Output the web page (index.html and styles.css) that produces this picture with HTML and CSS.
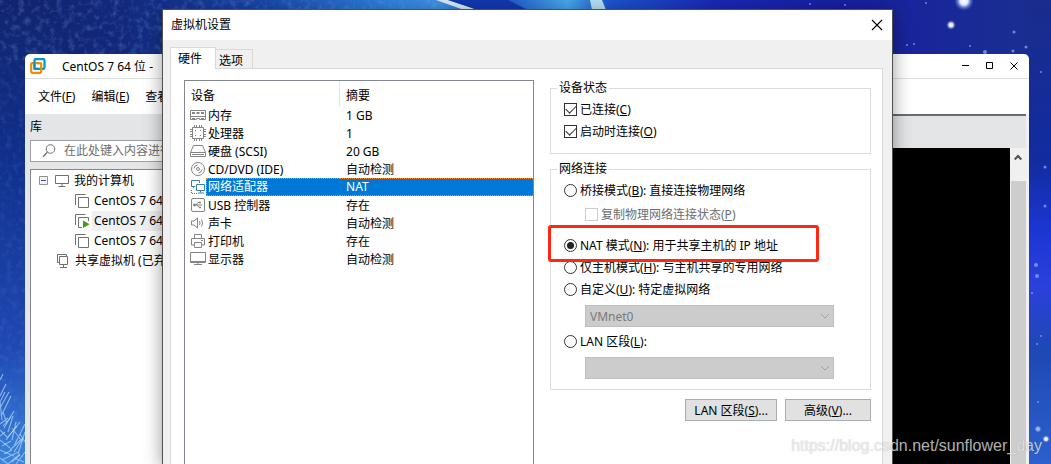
FILE: index.html
```html
<!DOCTYPE html>
<html lang="zh-CN">
<head>
  <meta charset="utf-8">
  <title>虚拟机设置</title>
  <link rel="stylesheet" href="styles.css">
</head>
<body>
  <div class="desktop">
    <svg class="wallpaper" viewBox="0 0 1051 464" preserveAspectRatio="xMidYMid slice" aria-hidden="true">
      <defs>
        <linearGradient id="sky-left" x1="0" y1="0" x2="0" y2="1">
          <stop offset="0" stop-color="#12246f"/>
          <stop offset="0.35" stop-color="#10308c"/>
          <stop offset="0.75" stop-color="#2048b4"/>
          <stop offset="1" stop-color="#3a84dc"/>
        </linearGradient>
        <linearGradient id="sky-top" x1="0" y1="0" x2="1" y2="0">
          <stop offset="0" stop-color="#12246f"/>
          <stop offset="0.12" stop-color="#12287c"/>
          <stop offset="0.25" stop-color="#1846a8"/>
          <stop offset="0.36" stop-color="#2c7cd8"/>
          <stop offset="0.42" stop-color="#4090e4"/>
          <stop offset="0.47" stop-color="#1648c0"/>
          <stop offset="0.54" stop-color="#48a8ec"/>
          <stop offset="0.58" stop-color="#1c54cc"/>
          <stop offset="0.68" stop-color="#1a28b4"/>
          <stop offset="0.8" stop-color="#181fa0"/>
          <stop offset="1" stop-color="#1a3090"/>
        </linearGradient>
        <linearGradient id="sky-right" x1="0" y1="0" x2="0" y2="1">
          <stop offset="0" stop-color="#1a2c8c"/>
          <stop offset="0.35" stop-color="#122ca0"/>
          <stop offset="0.5" stop-color="#1c36d4"/>
          <stop offset="0.62" stop-color="#2c40dc"/>
          <stop offset="0.75" stop-color="#1e48b4"/>
          <stop offset="1" stop-color="#2c60cc"/>
        </linearGradient>
        <radialGradient id="star">
          <stop offset="0" stop-color="#ffffff"/>
          <stop offset="0.4" stop-color="#dce4ff"/>
          <stop offset="1" stop-color="#4060d8" stop-opacity="0"/>
        </radialGradient>
        <filter id="grain" x="0" y="0" width="1" height="1">
          <feTurbulence type="fractalNoise" baseFrequency="0.16" numOctaves="3" seed="4"/>
          <feColorMatrix values="0 0 0 0 0.25  0 0 0 0 0.5  0 0 0 0 0.95  1.6 0 0 0 -0.75"/>
        </filter>
      </defs>
      <rect width="1051" height="60" fill="url(#sky-top)"/>
      <rect width="60" height="464" fill="url(#sky-left)"/>
      <rect x="1025" width="26" height="464" fill="url(#sky-right)"/>
      <path d="M436 0h12l30 10h-14z" fill="#d4ecf8"/>
      <path d="M590 0h12l4 10h-14z" fill="#b4e0f4"/>
      <path d="M448 0h60l20 10h-50z" fill="#1238b0"/>
      <rect width="440" height="60" filter="url(#grain)" opacity="0.4"/>
      <rect y="60" width="25" height="404" filter="url(#grain)" opacity="0.2"/>
      <g fill="none" stroke="#9cc8f4" stroke-width="1.2" opacity="0.8">
        <path d="M0 380l3-6M0 396l6-12M0 408l9-16M1 416l10-20M2 420l-2-18M4 428l10-17M8 432l5-16M6 440l14-18M12 440l4-18M14 446l11-22M10 450l13-12M18 454l7-22M0 430l7 7M0 440l10 8M0 450l14 6M2 460l16-8M8 464l12-10M16 464l9-12M0 424l8-6M3 412l4 12M20 434l5 8M12 428l9 12M0 458l8 6M14 458l10 4"/>
      </g>
      <g fill="none" stroke="#d4eafc" opacity="0.7">
        <path d="M0 402l5-10M3 426l8-9M7 438l10-12M2 446l9-5M14 452l9-14M4 454l8-4M12 462l8-7M0 436l5-4"/>
      </g>
      <circle cx="964" cy="1" r="10" fill="url(#star)"/>
      <circle cx="951" cy="25" r="5" fill="url(#star)"/>
      <circle cx="1046" cy="439" r="4" fill="url(#star)"/>
      <circle cx="1038" cy="429" r="4" fill="url(#star)" opacity="0.6"/>
      <g fill="#7ca4ec" opacity="0.8">
        <circle cx="1014" cy="32" r="1.5"/>
        <circle cx="985" cy="52" r="2"/>
        <circle cx="1013" cy="51" r="1.5"/>
        <circle cx="1026" cy="47" r="1.5"/>
        <circle cx="970" cy="46" r="1"/>
        <circle cx="907" cy="45" r="1"/>
        <circle cx="914" cy="44" r="1"/>
        <circle cx="926" cy="3" r="1"/>
        <circle cx="845" cy="5" r="1"/>
        <circle cx="810" cy="4" r="1"/>
        <circle cx="1041" cy="72" r="1"/>
        <circle cx="1045" cy="167" r="1.5"/>
        <circle cx="1045" cy="206" r="1.5"/>
        <circle cx="1036" cy="265" r="2"/>
        <circle cx="1037" cy="276" r="2"/>
        <circle cx="1032" cy="293" r="1"/>
        <circle cx="1037" cy="344" r="1"/>
        <circle cx="1041" cy="336" r="1"/>
        <circle cx="1038" cy="402" r="1"/>
      </g>
    </svg>

    <div class="workstation">
      <div class="ws-title">
        <svg class="logo" width="16" height="16" viewBox="0 0 16 16" aria-hidden="true">
          <rect x="4.5" y="1.2" width="10" height="9.6" rx="1" fill="none" stroke="#0095d3" stroke-width="2.2"/>
          <rect x="1.2" y="5.2" width="10" height="9.6" rx="1" fill="none" stroke="#f38b00" stroke-width="2.2"/>
          <path d="M4.5 4v6.8h4" fill="none" stroke="#0095d3" stroke-width="2.2"/>
        </svg>
        <span class="ws-name">CentOS 7 64 位 -</span>
        <button class="win-btn" aria-label="最小化"><svg width="8" height="8" viewBox="0 0 8 8"><path d="M0 3.5h7" stroke="#000"/></svg></button>
        <button class="win-btn" aria-label="最大化"><svg width="8" height="8" viewBox="0 0 8 8"><path d="M.5.5h6v6h-6z" fill="none" stroke="#000"/></svg></button>
        <button class="win-btn" aria-label="关闭"><svg width="8" height="8" viewBox="0 0 8 8"><path d="M.5.5l7 7M7.5.5l-7 7" stroke="#000"/></svg></button>
      </div>
      <div class="menubar">
        <button>文件(<u>F</u>)</button>
        <button>编辑(<u>E</u>)</button>
        <button>查看(<u>V</u>)</button>
      </div>
      <div class="ws-body">
        <div class="library">
          <label class="library-label" for="search">库</label>
          <div class="search">
            <svg width="14" height="14" viewBox="0 0 14 14" aria-hidden="true"><circle cx="8.5" cy="5" r="4.3" fill="none" stroke="#707070"/><path d="M5.4 8.2L1 12.8" stroke="#707070" stroke-width="1.3"/></svg>
            <input type="text" id="search" placeholder="在此处键入内容进行搜索">
          </div>
          <ul class="tree">
            <li>
              <svg class="toggle" width="10" height="10" viewBox="0 0 10 10"><path d="M.5.5h8v8h-8z" fill="#f4f4f4" stroke="#919191"/><path d="M2 4.5h5" stroke="#3350a8"/></svg>
              <svg width="16" height="14" viewBox="0 0 16 14" fill="none" stroke="#707070"><path d="M1.5 1.5h13v8h-13zM8 10v2M4.500 12.500h7"/></svg>
              <span>我的计算机</span>
            </li>
            <li class="vm">
              <svg width="16" height="14" viewBox="0 0 16 14" fill="none" stroke="#707070"><path d="M1.500 11V.500h10M4.500 3.500h10v10h-10z"/></svg>
              <span>CentOS 7 64 位</span>
            </li>
            <li class="vm">
              <svg width="16" height="14" viewBox="0 0 16 14" fill="none" stroke="#707070"><path d="M1.500 11V.500h10M8 13.500H4.500v-10h10V7"/><path d="M9 6.500l6.500 3.700-6.500 3.700z" fill="#3f9c16" stroke="none"/></svg>
              <span class="running">CentOS 7 64 位</span>
            </li>
            <li class="vm">
              <svg width="16" height="14" viewBox="0 0 16 14" fill="none" stroke="#707070"><path d="M1.500 11V.500h10M4.500 3.500h10v10h-10z"/></svg>
              <span>CentOS 7 64 位</span>
            </li>
            <li class="shared">
              <svg width="16" height="14" viewBox="0 0 16 14" fill="none" stroke="#707070"><path d="M4 8.500H2.500v-8h9V2M4.500 2.500h8v8h-8zM8.500 10.500v3M5 13.500h7"/></svg>
              <span>共享虚拟机 (已弃用)</span>
            </li>
          </ul>
        </div>
        <div class="console">
          <div class="console-bar"></div>
          <div class="console-view">
            <div class="screen"></div>
            <div class="scrollbar">
              <svg width="8" height="7" viewBox="0 0 8 7"><path d="M.7 5.500L4 2l3.300 3.500" fill="none" stroke="#505050" stroke-width="2"/></svg>
              <div class="thumb"></div>
            </div>
          </div>
        </div>
      </div>
    </div>

    <div class="dialog" role="dialog" aria-labelledby="dialog-title">
      <div class="dialog-title">
        <span id="dialog-title">虚拟机设置</span>
        <button class="win-btn" aria-label="关闭"><svg width="12" height="12" viewBox="0 0 12 12"><path d="M1 1l10 10M11 1L1 11" stroke="#000" stroke-width="1.1"/></svg></button>
      </div>
      <div class="dialog-body">
        <div class="tabs" role="tablist">
          <button class="tab active" role="tab" aria-selected="true">硬件</button>
          <button class="tab" role="tab">选项</button>
        </div>
        <div class="panel">
          <div class="device-list">
            <table>
              <colgroup>
                <col class="col-icon">
                <col class="col-name">
                <col>
              </colgroup>
              <thead>
                <tr><th class="name-head" colspan="2">设备</th><th>摘要</th></tr>
              </thead>
              <tbody>
                <tr>
                  <td class="icon"><svg width="16" height="16" viewBox="0 0 16 16" fill="none" stroke="#858585"><path d="M.500 3.500h15v9h-6v-1h-3v1h-6z"/><path d="M2 5h3v2H2zM6.500 5h3v2h-3zM11 5h3v2h-3z" fill="#858585" stroke="none"/><path d="M1 9.500h14M2 11.500h3M11 11.500h3"/></svg></td>
                  <td>内存</td><td>1 GB</td>
                </tr>
                <tr>
                  <td class="icon"><svg width="16" height="16" viewBox="0 0 16 16" fill="none" stroke="#858585"><path d="M2.500 2.500h11v11h-11zM4.500 0v2M6.500 0v2M9.500 0v2M11.500 0v2M4.500 14v2M6.500 14v2M9.500 14v2M11.500 14v2M0 4.500h2M0 6.500h2M0 9.500h2M0 11.500h2M14 4.500h2M14 6.500h2M14 9.500h2M14 11.500h2"/><path d="M5 5h1v1H5zM10 5h1v1h-1zM5 10h1v1H5zM10 10h1v1h-1z" fill="#858585" stroke="none"/></svg></td>
                  <td>处理器</td><td>1</td>
                </tr>
                <tr>
                  <td class="icon"><svg width="16" height="16" viewBox="0 0 16 16" fill="none" stroke="#858585"><path d="M3.500 2.500h9l3 7v4H.500v-4zM.500 9.500h15M2 11.500h12"/></svg></td>
                  <td>硬盘 (SCSI)</td><td>20 GB</td>
                </tr>
                <tr>
                  <td class="icon"><svg width="16" height="16" viewBox="0 0 16 16" fill="none" stroke="#858585"><circle cx="8" cy="8" r="6.500"/><circle cx="8" cy="8" r="1.500"/><path d="M4 7.500A4 4 0 0 1 7.500 4M12 8.500A4 4 0 0 1 8.500 12"/></svg></td>
                  <td>CD/DVD (IDE)</td><td>自动检测</td>
                </tr>
                <tr class="selected">
                  <td class="icon"><svg width="16" height="16" viewBox="0 0 16 16" fill="none" stroke="#3c7ca8"><path d="M5 7.500H1.500v-6h8V4"/><path d="M6.500 5.500h8v6h-8zM10.500 12v1.500M8 14h6" fill="#fff"/><path d="M3.500 8v2M1.500 11v3.500H7" stroke-dasharray="1 1"/></svg></td>
                  <td>网络适配器</td><td>NAT</td>
                </tr>
                <tr>
                  <td class="icon"><svg width="16" height="16" viewBox="0 0 16 16" fill="none" stroke="#858585"><rect x="1.500" y="1.500" width="13" height="13" rx="1.500"/><path d="M4 8h8M6 8l2-2.500h2M7 8l2 2.500h1"/><circle cx="4.500" cy="8" r="1" fill="#858585"/><path d="M9.500 5h1v1h-1zM9.500 10h1v1h-1z" fill="#858585"/></svg></td>
                  <td>USB 控制器</td><td>存在</td>
                </tr>
                <tr>
                  <td class="icon"><svg width="16" height="16" viewBox="0 0 16 16" fill="none" stroke="#858585"><path d="M1.500 6h2.500l3.500-3v10L4 10H1.500zM9.500 6q1 2 0 4M11.500 4.500q2 3.500 0 7"/></svg></td>
                  <td>声卡</td><td>自动检测</td>
                </tr>
                <tr>
                  <td class="icon"><svg width="16" height="16" viewBox="0 0 16 16" fill="none" stroke="#858585"><path d="M4.500 5.500v-4h7v4M4 12H1.500V5.500h13V12H12M4.500 9.500h7v5h-7zM11 7.500h2"/></svg></td>
                  <td>打印机</td><td>存在</td>
                </tr>
                <tr>
                  <td class="icon"><svg width="16" height="16" viewBox="0 0 16 16" fill="none" stroke="#858585"><path d="M.500 1.500h15v10H.500z"/><path d="M1 10.500h14M4 13.500h8M8 12v1"/></svg></td>
                  <td>显示器</td><td>自动检测</td>
                </tr>
              </tbody>
            </table>
          </div>

          <form class="settings">
            <fieldset>
              <legend>设备状态</legend>
              <label class="option"><input type="checkbox" checked><span>已连接(<u>C</u>)</span></label>
              <label class="option"><input type="checkbox" checked><span>启动时连接(<u>O</u>)</span></label>
            </fieldset>
            <fieldset class="network">
              <legend>网络连接</legend>
              <label class="option"><input type="radio" name="net"><span>桥接模式(<u>B</u>): 直接连接物理网络</span></label>
              <label class="option sub"><input type="checkbox" disabled><span>复制物理网络连接状态(<u>P</u>)</span></label>
              <div class="highlighted">
                <label class="option"><input type="radio" name="net" checked><span>NAT 模式(<u>N</u>): 用于共享主机的 IP 地址</span></label>
                <div class="marker"></div>
              </div>
              <label class="option"><input type="radio" name="net"><span>仅主机模式(<u>H</u>): 与主机共享的专用网络</span></label>
              <label class="option"><input type="radio" name="net"><span>自定义(<u>U</u>): 特定虚拟网络</span></label>
              <div class="combo">
                <select aria-label="自定义" disabled><option>VMnet0</option></select>
                <svg width="10" height="6" viewBox="0 0 10 6"><path d="M1 1l4 4 4-4" fill="none" stroke="#a0a0a0"/></svg>
              </div>
              <label class="option"><input type="radio" name="net"><span>LAN 区段(<u>L</u>):</span></label>
              <div class="combo">
                <select aria-label="LAN 区段" disabled><option></option></select>
                <svg width="10" height="6" viewBox="0 0 10 6"><path d="M1 1l4 4 4-4" fill="none" stroke="#a0a0a0"/></svg>
              </div>
            </fieldset>
            <div class="buttons">
              <button type="button">LAN 区段(<u>S</u>)...</button>
              <button type="button">高级(<u>V</u>)...</button>
            </div>
          </form>
        </div>
      </div>
    </div>

    <div class="watermark">https://blog.csdn.net/sunflower_day</div>
  </div>
</body>
</html>
```
FILE: styles.css
```css
* {
  box-sizing: border-box;
}

body {
  margin: 0;
  font-family: "Noto Sans", "Noto Sans CJK SC", sans-serif;
  font-size: 12px;
  line-height: 18px;
  color: #000;
}

button,
input,
select {
  margin: 0;
  padding: 0;
  border: none;
  background: none;
  font: inherit;
  color: inherit;
}

svg {
  display: block;
  flex: none;
}

.desktop {
  position: relative;
  height: 100vh;
  overflow: hidden;
  background: #1a3090;
}

.wallpaper {
  position: absolute;
  width: 100%;
  height: 100%;
}

/* main window */
.workstation {
  position: absolute;
  top: 54px;
  right: 22px;
  bottom: 0;
  left: 25px;
  display: flex;
  flex-direction: column;
  border-radius: 5px 5px 0 0;
  background: #fff;
  overflow: hidden;
}

.ws-title {
  display: flex;
  align-items: center;
  height: 25px;
  padding: 0 3px 0 5px;
  border-bottom: 1px solid #e0e0e0;
}

.ws-name {
  flex: 1;
  margin-left: 16px;
  padding-top: 2px;
}

.win-btn {
  display: flex;
  align-items: center;
  justify-content: center;
  width: 24px;
  height: 24px;
}

.menubar {
  display: flex;
  align-items: center;
  gap: 16px;
  height: 35px;
  padding: 0 13px;
}

.ws-body {
  display: flex;
  flex: 1;
  min-height: 0;
  background: #e3e5e7;
}

.library {
  display: flex;
  flex-direction: column;
  width: 240px;
  padding: 4px 5px 0;
}

.library-label {
  margin-bottom: 4px;
}

.search {
  display: flex;
  align-items: center;
  gap: 8px;
  height: 22px;
  margin-bottom: 7px;
  padding: 0 11px;
  border: 1px solid #a0a0a0;
  background: #fff;
}

.search input {
  flex: 1;
  min-width: 0;
}

.search input::placeholder {
  color: #6d6d6d;
}

.tree {
  flex: 1;
  margin: 0;
  padding: 1px 0 0;
  border: 1px solid #828790;
  border-bottom: none;
  background: #fff;
  list-style: none;
}

.tree li {
  display: flex;
  align-items: center;
  height: 20px;
  padding-left: 8px;
  white-space: nowrap;
}

.tree li span {
  flex: 1;
  margin-left: 2px;
  padding-left: 2px;
  line-height: 20px;
}

.tree .toggle {
  margin-right: 5px;
}

.tree .vm {
  padding-left: 43px;
}

.tree .shared {
  padding-left: 24px;
}

.running {
  background: #f0f0f0;
}

.console {
  display: flex;
  flex: 1;
  flex-direction: column;
  padding-right: 3px;
  background: #f0f0f0;
}

.console-bar {
  height: 34px;
  border-top: 2px solid #6b6b6b;
  background: #e3e5e7;
}

.console-view {
  display: flex;
  flex: 1;
}

.screen {
  flex: 1;
  background: #000;
}

.scrollbar {
  display: flex;
  flex-direction: column;
  align-items: center;
  width: 16px;
  padding: 6px 0 0;
}

.thumb {
  flex: 1;
  width: 15px;
  margin-top: 20px;
  background: #cdcdcd;
}

/* settings dialog */
.dialog {
  position: absolute;
  top: 10px;
  right: 159px;
  bottom: 0;
  left: 163px;
  display: flex;
  flex-direction: column;
  background: #f0f0f0;
  box-shadow: 0 0 0 1px #505050, 0 4px 18px rgba(0, 0, 0, 0.45);
}

.dialog-title {
  display: flex;
  align-items: center;
  justify-content: space-between;
  height: 30px;
  padding: 0 3px 0 8px;
  background: #fff;
}

.dialog-body {
  display: flex;
  flex: 1;
  flex-direction: column;
  padding: 7px 9px 0 7px;
}

.tabs {
  display: flex;
  align-items: flex-end;
  height: 22px;
  margin-bottom: -1px;
}

.tab {
  height: 20px;
  padding: 2px 9px 0 3px;
  border: 1px solid #d9d9d9;
  border-left: none;
}

.tab.active {
  z-index: 1;
  height: 22px;
  padding: 0 13px 0 7px;
  border-bottom: none;
  border-left: 1px solid #d9d9d9;
  background: #fff;
}

.panel {
  display: flex;
  flex: 1;
  gap: 16px;
  padding: 11px 11px 0 13px;
  border: 1px solid #d9d9d9;
  border-bottom: none;
  background: #fff;
}

.device-list {
  flex: 1;
  border: 1px solid #828790;
  border-bottom: none;
}

table {
  width: 100%;
  border-spacing: 0;
  table-layout: fixed;
}

.col-icon {
  width: 21px;
}

.col-name {
  width: 134px;
}

th {
  height: 25px;
  padding: 4px 0 0 6px;
  font-weight: normal;
  text-align: left;
}

.name-head {
  border-right: 1px solid #e5e5e5;
}

td {
  height: 18px;
  padding: 2px 0 0 6px;
  line-height: 16px;
}

td.icon {
  padding: 0 0 0 5px;
}

.icon + td {
  padding-left: 2px;
}

.selected td:not(.icon) {
  padding-top: 0;
  border-top: 1px dotted #ff8728;
  border-bottom: 1px dotted #ff8728;
  background: #0078d7;
  color: #fff;
}

.selected .icon + td {
  padding-left: 1px;
  border-left: 1px dotted #ff8728;
}

.settings {
  width: 321px;
}

fieldset {
  min-width: 0;
  margin: 0 0 7px;
  padding: 2px 13px 11px;
  border: 1px solid #dcdcdc;
}

legend {
  margin-left: -7px;
  padding: 0 2px;
  line-height: 16px;
}

.network {
  margin-bottom: 9px;
  padding-bottom: 10px;
}

.option {
  display: flex;
  align-items: center;
  gap: 3px;
  height: 22px;
}

.option span {
  padding-top: 2px;
}

.option input {
  display: flex;
  align-items: center;
  justify-content: center;
  flex: none;
  width: 13px;
  height: 13px;
  border: 1px solid #333;
  background: #fff;
  appearance: none;
}

.option input[type="radio"] {
  border-radius: 50%;
}

.option input[type="radio"]:checked::before {
  content: "";
  width: 7px;
  height: 7px;
  border-radius: 50%;
  background: #222;
}

.option input[type="checkbox"]:checked::before {
  content: "";
  width: 9px;
  height: 5px;
  margin-bottom: 3px;
  border: solid #333;
  border-width: 0 0 1px 1px;
  transform: rotate(-45deg);
}

.sub {
  margin: 2px 0 9px 21px;
  color: #6d6d6d;
}

.option input:disabled {
  border-color: #ccc;
}

.highlighted {
  position: relative;
}

.marker {
  position: absolute;
  top: -9px;
  right: 38px;
  bottom: -6px;
  left: -16px;
  border: 3px solid #fe2712;
  border-radius: 3px;
}

.combo {
  display: grid;
  align-items: center;
  margin: 5px 23px 3px 21px;
}

.combo:last-child {
  margin-bottom: 0;
}

.combo select {
  grid-area: 1 / 1;
  width: 100%;
  height: 22px;
  padding: 2px 4px 0;
  border: 1px solid #bfbfbf;
  border-radius: 0;
  background: #ccc;
  color: #7a7a7a;
  opacity: 1;
  appearance: none;
}

.combo svg {
  grid-area: 1 / 1;
  justify-self: end;
  margin-right: 4px;
}

.buttons {
  display: flex;
  justify-content: flex-end;
  gap: 8px;
}

.buttons button {
  min-width: 86px;
  height: 22px;
  padding: 2px 8px 0;
  border: 1px solid #adadad;
  background: #e1e1e1;
}

.watermark {
  position: absolute;
  right: 9px;
  bottom: 9px;
  font-family: "Liberation Sans", sans-serif;
  font-size: 16px;
  color: rgba(255, 255, 255, 0.7);
  text-shadow: 0 0 1px rgba(0, 0, 0, 0.3);
}
```
